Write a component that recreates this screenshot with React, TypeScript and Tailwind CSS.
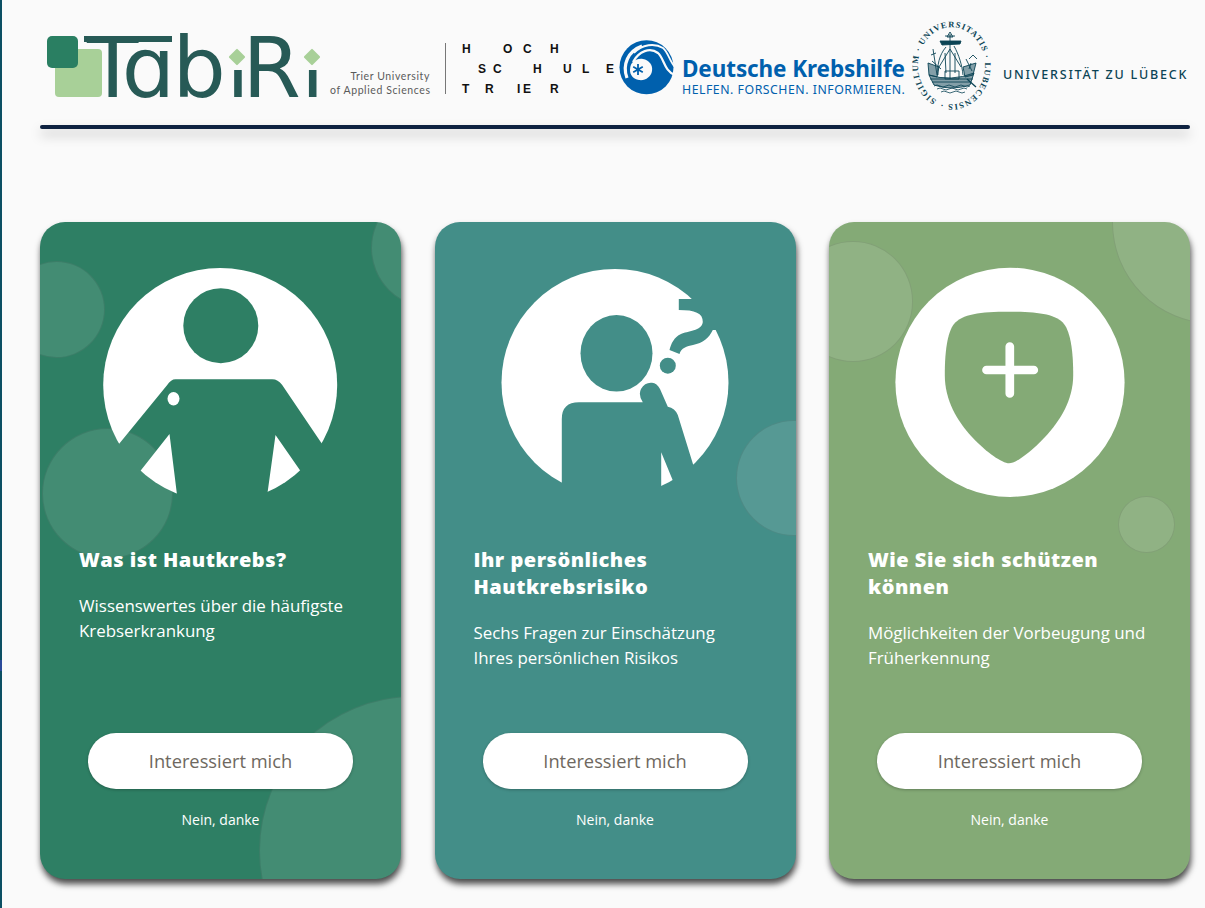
const hochschule: [string, string][][] = [
  [["H", "ml-[16px]"], ["O", "ml-[32.3px]"], ["C", "ml-[10.7px]"], ["H", "ml-[18.3px]"]],
  [["S", "ml-[32px]"], ["C", "ml-[7px]"], ["H", "ml-[31.3px]"], ["U", "ml-[21.3px]"], ["L", "ml-[10.3px]"], ["E", "ml-[16.7px]"]],
  [["T", "ml-[16px]"], ["R", "ml-[15.7px]"], ["I", "ml-[23.3px]"], ["E", "ml-[2.7px]"], ["R", "ml-[19px]"]],
];

const TabiriLogo = () => (
  <div className="relative h-[70px] w-[276px] shrink-0">
    <div className="absolute left-[9px] top-[17.5px] h-[48px] w-[47px] rounded-[4px] bg-[#a8d098]" />
    <div className="absolute left-[0.7px] top-[4.2px] h-[32px] w-[31px] rounded-[5px] bg-[#2a7f62]" />
    <div className="absolute left-[38.3px] top-[4.5px] h-[6.3px] w-[88px] bg-[#275a56]" />
    <span className="absolute left-[40.9px] top-[-18.6px] font-['DejaVu_Sans',sans-serif] text-[84px] leading-[110px] text-[#275a56] whitespace-nowrap">
      T<span className="ml-[-16.5px]">ɑ</span>
      <span className="ml-[-2.6px]">b</span>
      <span className="ml-[0.4px] inline-block [clip-path:inset(57px_0_0_0)]">ı</span>
      <span className="ml-[-7px]">R</span>
      <span className="ml-[0.2px] inline-block [clip-path:inset(57px_0_0_0)]">ı</span>
    </span>
    <div className="absolute left-[185.3px] top-[19.8px] h-[12px] w-[12px] rotate-45 rounded-[1px] bg-[#a8d098]" />
    <div className="absolute left-[260px] top-[19.8px] h-[12px] w-[12px] rotate-45 rounded-[1px] bg-[#a8d098]" />
  </div>
);

const KrebshilfeMark = () => (
  <svg viewBox="0 0 70 65" className="h-[65px] w-[70px] shrink-0">
    <circle cx="34.5" cy="33.3" r="27" fill="#0060ad" />
    <path d="M15 44C10 31 16 17 30 12" fill="none" stroke="#fafafa" strokeWidth="3.2" />
    <path d="M22 19C30 10 43 9 51 14C56 18 58 28 63 33" fill="none" stroke="#fafafa" strokeWidth="1.8" />
    <path d="M21 28C27 17 38 13 46 19C52 24 52 37 63 41" fill="none" stroke="#fafafa" strokeWidth="2.2" />
    <path d="M18 36C18 27 25 24 31 25C37 26 41 31 40 37C39 43 33 47 27 46C21 45 18 41 18 36Z" fill="#fafafa" />
    <path d="M26 30V41M21.2 32.8L30.8 38.2M30.8 32.8L21.2 38.2" stroke="#0060ad" strokeWidth="1.8" />
  </svg>
);

const Seal = () => (
  <svg viewBox="0 0 90 95" className="h-[95px] w-[90px] shrink-0" fill="none" stroke="#0b4455">
    <defs>
      <path id="seal-ring" d="M27.5 81.1A33.5 38.5 0 1 1 57.5 81.1A33.5 38.5 0 0 1 27.5 81.1" />
    </defs>
    <text fill="#0b4455" stroke="none" fontFamily="'Liberation Serif', serif" fontSize="8.5" fontWeight="700" letterSpacing="1">
      <textPath href="#seal-ring">SIGILLUM · UNIVERSITATIS · LUBECENSIS ·</textPath>
    </text>
    <g strokeWidth="0.9">
      <path d="M41 15V60M36 17H46M41 13L38 18H44Z" />
      <path d="M31 22L52 22L51 25L33 26Z" fill="#0b4455" />
      <path d="M37 28C30 36 28 47 29 56M45 27C50 36 53 46 54 56M41 30L30 48M41 30L52 48M36 34L37 54M46 34L46 54" />
      <path d="M24 30L28 56M22 36L27 34M23 42L32 50" />
      <path d="M19 44L30 48L28 58L20 56ZM67 44L54 48L56 58L64 56Z" fill="#0b4455" fillOpacity="0.5" />
      <path d="M60 40L64 36L68 40M62 44L60 50M57 40L63 52" />
      <path d="M20 56Q42 63 65 54L61 66Q42 72 25 66Z" fill="#0b4455" fillOpacity="0.5" />
      <path d="M21 60H64M23 63H62M36 52H50V60H36Z" />
      <path d="M25 67Q28 65 31 67T37 67T43 67T49 67T55 67T61 67M28 70Q31 68 34 70T40 70T46 70T52 70T58 70M32 73Q35 71 38 73T44 73T50 73T56 73" strokeWidth="0.8" />
      <path d="M58 60L67 68" strokeWidth="1.3" />
    </g>
  </svg>
);

const Header = () => (
  <header className="flex h-[125px] items-center pl-[6px] pt-[8px]">
    <TabiriLogo />
    <div className="ml-[8px] mt-[32px] w-[100px] shrink-0 text-right font-['Lato',sans-serif] text-[10.5px] leading-[14px] tracking-[0.6px] text-[#5a5a5a] whitespace-nowrap">
      <p>Trier University</p>
      <p>of Applied Sciences</p>
    </div>
    <div className="ml-[15px] mt-[4px] h-[51px] w-px shrink-0 bg-[#777777]" />
    <div className="mt-[4px] w-[172px] shrink-0 font-['Liberation_Sans',sans-serif] text-[12px] font-bold leading-[20px] text-[#111111]">
      {hochschule.map((row, rowIndex) => (
        <div key={rowIndex} className="flex">
          {row.map(([letter, offset], index) => (
            <span key={index} className={offset}>{letter}</span>
          ))}
        </div>
      ))}
    </div>
    <div className="ml-[-6px]">
      <KrebshilfeMark />
    </div>
    <div className="mt-[18px] flex w-[227px] shrink-0 flex-col font-['Noto_Sans',sans-serif] text-[#0060ad]">
      <p className="text-[22.5px] font-bold leading-[28px] tracking-[-0.1px] whitespace-nowrap">Deutsche Krebshilfe</p>
      <p className="text-[12.3px] leading-[14px] tracking-[0.52px] whitespace-nowrap">HELFEN. FORSCHEN. INFORMIEREN.</p>
    </div>
    <Seal />
    <p className="ml-[4px] mt-[18px] font-['Noto_Sans',sans-serif] text-[12.5px] font-medium tracking-[1.8px] text-[#0b4455] whitespace-nowrap">
      UNIVERSITÄT ZU LÜBECK
    </p>
  </header>
);

const Bubble = ({ className }: { className: string }) => (
  <div className={"absolute rounded-full border border-black/10 bg-white/10 " + className} />
);

const PersonIcon = () => (
  <svg viewBox="0 0 240 240" className="relative mx-auto h-[240px] w-[240px]">
    <mask id="person-cut">
      <rect width="240" height="240" fill="white" />
      <circle cx="119.8" cy="60.7" r="37.5" fill="black" />
      <path d="M0 201L66.2 120Q70 114.3 74.5 114.3H171.2Q177 114.3 181.2 120L240 207L220 235.5L174.5 170L164 246H78L68.5 169L20 230.4Z" fill="black" />
      <ellipse cx="72.5" cy="133.7" rx="6" ry="6.7" fill="white" />
    </mask>
    <circle cx="119.2" cy="120" r="117" fill="white" mask="url(#person-cut)" />
  </svg>
);

const QuestionIcon = () => (
  <svg viewBox="0 0 240 240" className="relative mx-auto h-[240px] w-[240px]">
    <mask id="question-cut">
      <rect width="240" height="240" fill="white" />
      <ellipse cx="121.5" cy="88.3" rx="36" ry="38.3" fill="black" />
      <path d="M66.8 245V154Q66.8 137.3 84 137.3H147.8Q143 130 146 124Q150 117 157 117.7Q162 118 165 124L172.8 141.7Q180 143 182.8 150L206 225L190 245L166.2 187.3V245Z" fill="black" />
      <path d="M183.8 34V45C200 45 208 48 207.8 57C207 66 192 66 186 69C179 72 176 79 174.5 85L184.5 89C186 83 192 81 198 80C208 78 214 73 217.8 65L240 65V34Z" fill="black" />
      <circle cx="172.8" cy="100.7" r="8" fill="black" />
    </mask>
    <circle cx="120" cy="117.4" r="113.5" fill="white" mask="url(#question-cut)" />
  </svg>
);

const ShieldIcon = () => (
  <svg viewBox="0 0 240 240" className="relative mx-auto h-[240px] w-[240px]">
    <mask id="shield-cut">
      <rect width="240" height="240" fill="white" />
      <path d="M119 46.7C148 46.7 166 49 174 59C181 68 183.2 88 183.2 110C183.2 135 170 156 155 172C140 188 126 198 119 198.3C112 198 97 188 82 172C67 156 54.8 135 54.8 110C54.8 88 57 68 64 59C72 49 90 46.7 119 46.7Z" fill="black" />
      <path d="M96.5 105H143.8M119.8 81.5V128.5" stroke="white" strokeWidth="8.7" strokeLinecap="round" />
    </mask>
    <circle cx="120" cy="117.3" r="114.6" fill="white" mask="url(#shield-cut)" />
  </svg>
);

const cards = [
  {
    title: "Was ist Hautkrebs?",
    text: "Wissenswertes über die häufigste Krebserkrankung",
    color: "bg-[#2e7f64]",
    icon: <PersonIcon />,
    bubbles: [
      "left-[-32px] top-[39px] h-[97px] w-[97px]",
      "left-[331px] top-[-34px] h-[120px] w-[120px]",
      "left-[2px] top-[206px] h-[131px] w-[131px]",
      "left-[219px] top-[474px] h-[309px] w-[309px]",
    ],
  },
  {
    title: "Ihr persönliches Hautkrebsrisiko",
    text: "Sechs Fragen zur Einschätzung Ihres persönlichen Risikos",
    color: "bg-[#438e88]",
    icon: <QuestionIcon />,
    bubbles: ["left-[301px] top-[198px] h-[116px] w-[116px]"],
  },
  {
    title: "Wie Sie sich schützen können",
    text: "Möglichkeiten der Vorbeugung und Früherkennung",
    color: "bg-[#84aa76]",
    icon: <ShieldIcon />,
    bubbles: [
      "left-[-36px] top-[19px] h-[121px] w-[120px]",
      "left-[283px] top-[-101px] h-[203px] w-[203px]",
      "left-[289px] top-[274px] h-[57px] w-[57px]",
    ],
  },
];

export default function App() {
  return (
    <div className="flex h-[908px] overflow-hidden bg-[#fafafa] font-['Open_Sans',sans-serif]">
      <div className="w-[2px] shrink-0 bg-[#0b4f63]">
        <div className="mt-[660px] h-[11px] bg-[#2a4a9a]" />
      </div>
      <main className="flex-1 pl-[38px] pr-[15px]">
        <Header />
        <div className="h-[4px] rounded-full bg-[#0e2240] shadow-[0_6px_12px_rgba(0,0,0,0.25)]" />
        <section className="mt-[93px] grid grid-cols-3 gap-[33.5px]">
          {cards.map((card) => (
            <article
              key={card.title}
              className={"relative h-[657px] rounded-[25px] pb-[49px] pt-[43px] text-white shadow-[1px_5px_6px_rgba(0,0,0,0.7)] " + card.color}
            >
              <div className="absolute inset-0 overflow-hidden rounded-[25px]">
                {card.bubbles.map((bubble) => (
                  <Bubble key={bubble} className={bubble} />
                ))}
              </div>
              <div className="relative flex h-full flex-col">
                {card.icon}
                <h2 className="mt-[41px] px-[39px] text-[20px] font-extrabold leading-[27px] tracking-[0.5px]">{card.title}</h2>
                <p className="mt-[19.5px] px-[39px] text-[16.9px] leading-[25px]">{card.text}</p>
                <button className="mx-auto mt-auto h-[56px] w-[265px] rounded-full bg-white text-[18.3px] text-[#6e6860] shadow-[0_1px_3px_rgba(0,0,0,0.25)]">
                  Interessiert mich
                </button>
                <p className="mt-[21.5px] text-center text-[14px] font-medium leading-[20px]">Nein, danke</p>
              </div>
            </article>
          ))}
        </section>
      </main>
    </div>
  );
}
